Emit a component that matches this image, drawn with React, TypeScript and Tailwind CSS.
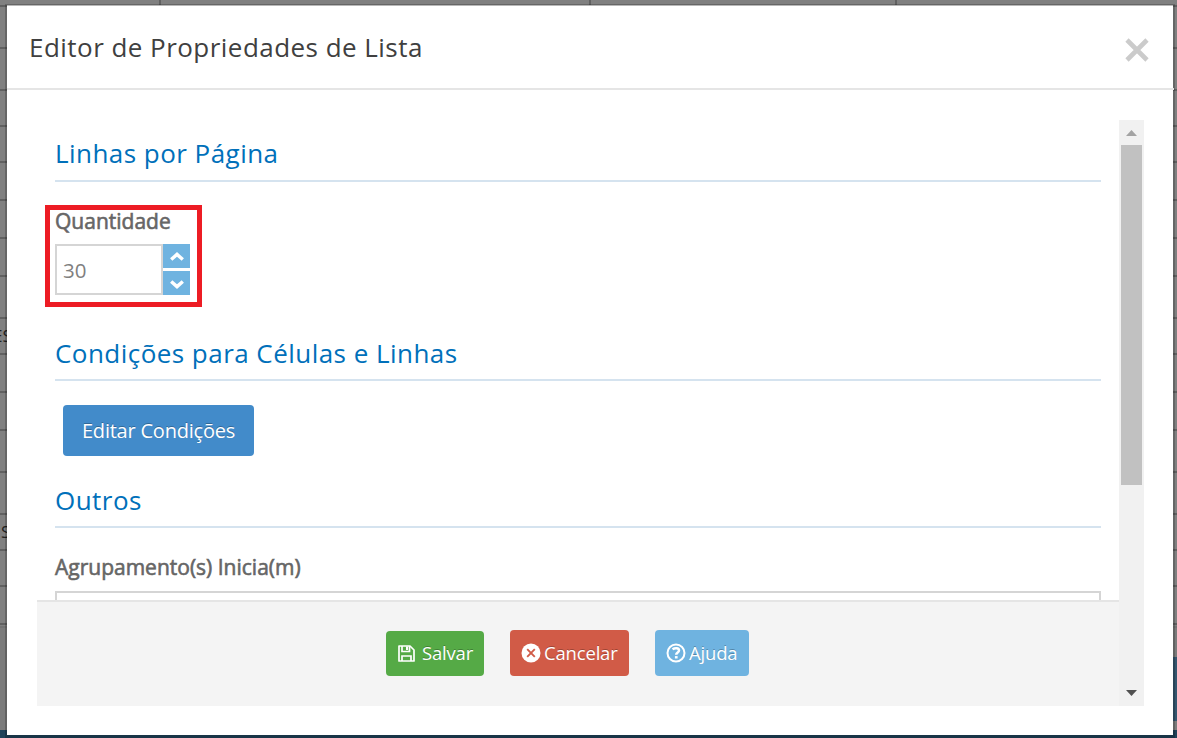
import { useState } from 'react';
import type { ReactNode } from 'react';

const ROW_HEIGHTS = [42, 42, 36, 36, 38, 38, 38, 42, 36, 38, 38, 42, 42, 36, 36, 38];
const ROW_TEXT: Record<number, string> = { 8: 'ES', 13: 'S' };

function PageBehind() {
  return (
    <div className="flex h-full flex-col bg-[#808080]">
      <div className="flex h-[5px] shrink-0">
        <div className="w-[161px] border-r-2 border-[#616161]" />
        <div className="w-[430px] border-r-2 border-[#616161]" />
        <div className="w-[306px] border-r-2 border-[#616161]" />
      </div>
      {ROW_HEIGHTS.map((height, index) => (
        <div
          key={index}
          className="flex shrink-0 items-center border-t-2 border-[#606060] text-[17px] leading-6 text-[#222]"
          style={{ height }}
        >
          <span className={index === 8 ? '-ml-[7px]' : 'ml-px'}>{ROW_TEXT[index]}</span>
        </div>
      ))}
      <div className="h-[3px] shrink-0 border-t-2 border-[#606060]" />
      <div className="flex h-[104px] shrink-0 justify-end border-t-2 border-[#737373] bg-[#7b7b7b]">
        <div className="mt-[29px] h-16 w-3 bg-[#35566f]" />
      </div>
      <div className="flex-1 bg-[#1f4259]" />
    </div>
  );
}

function Section({ title, children, className }: { title: string; children: ReactNode; className: string }) {
  return (
    <section className={className}>
      <h4 className="border-b-2 border-[#d5e3ef] text-[26px] leading-[38px] tracking-[0.46px] text-[#0070ba]">
        {title}
      </h4>
      {children}
    </section>
  );
}

function Label({ children }: { children: ReactNode }) {
  return (
    <label className="block text-[21px] leading-7 text-[#666] [-webkit-text-stroke:0.6px_#666]">
      {children}
    </label>
  );
}

function Chevron({ down = false }: { down?: boolean }) {
  return (
    <svg width="14" height="10" viewBox="0 0 14 10" className={down ? 'rotate-180' : ''}>
      <path d="M1.2 7.6 7 2.4l5.8 5.2" fill="none" stroke="#fff" strokeWidth="3.4" />
    </svg>
  );
}

function SaveIcon() {
  return (
    <svg width="17" height="17" viewBox="0 0 17 17" fill="none" stroke="#fff" strokeWidth="1.7">
      <path d="M1 1h11l4 4v11H1z" strokeLinejoin="round" />
      <path d="M4 1v5.5h7.500V1M4 16v-5h9v5" />
      <path d="M9 1.5v3.500" strokeWidth="2" />
    </svg>
  );
}

function CancelIcon() {
  return (
    <svg width="20" height="20" viewBox="0 0 20 20">
      <circle cx="10" cy="10" r="9.5" fill="#fff" />
      <path d="m6.2 6.2 7.6 7.6m0-7.6-7.6 7.6" stroke="#d15b47" strokeWidth="1.9" />
    </svg>
  );
}

function HelpIcon() {
  return (
    <svg width="20" height="20" viewBox="0 0 20 20" fill="none" stroke="#fff">
      <circle cx="10" cy="10" r="8.5" strokeWidth="2" />
      <path d="M6.5 6.3c2.5-1.5 6.5-1.5 6.5 1.2 0 2.2-2.8 1.8-2.8 4.3" strokeWidth="2.5" />
      <path d="M8.9 14.3h2.7" strokeWidth="2.4" />
    </svg>
  );
}

const BUTTON = 'flex items-center rounded-[4px] text-white [text-shadow:0_-1px_0_rgba(0,0,0,0.25)]';

export default function App() {
  const [quantity, setQuantity] = useState(30);

  return (
    <div className="relative h-[738px] w-[1177px] overflow-hidden font-['Open_Sans',sans-serif]">
      <PageBehind />

      <div className="absolute top-[5px] left-[7px] flex h-[730px] w-[1166px] flex-col border-t border-[#b8b8b8] bg-white shadow-[0_1px_0_2px_rgba(0,0,0,0.2)]">
        <header className="-mr-px flex h-[84px] shrink-0 justify-between border-b-2 border-[#e5e5e5] pr-[25px] pl-[22px]">
          <h3 className="pt-[22px] text-[26px] leading-[38px] tracking-[0.46px] text-[#404040]">
            Editor de Propriedades de Lista
          </h3>
          <button aria-label="Fechar" className="mt-8 h-6">
            <svg width="24" height="24" viewBox="0 0 24 24">
              <path d="m2 2 20 20M22 2 2 22" stroke="#cbcbcb" strokeWidth="4.6" />
            </svg>
          </button>
        </header>

        <div className="mt-[30px] ml-[30px] flex h-[586px] w-[1107px]">
          <div className="flex w-[1082px] flex-col">
            <main className="h-[480px] overflow-hidden px-[18px]">
              <Section title="Linhas por Página" className="h-[200px] pt-[14px] [&>h4]:h-12">
                <div className="mt-[23px] -ml-[10px] h-[102px] w-[157px] border-[5px] border-[#ed1c24] pl-[5px]">
                  <div className="-mt-[3px]">
                    <Label>Quantidade</Label>
                  </div>
                  <div className="mt-[9px] flex h-[51px]">
                    <input
                      value={quantity}
                      onChange={(e) => setQuantity(Number(e.target.value) || 0)}
                      className="w-[108px] border-2 border-[#d5d5d5] pt-px pl-[6px] text-[20.5px] text-[#808080] outline-none"
                    />
                    <div className="flex w-[27px] flex-col gap-[3px]">
                      <button
                        onClick={() => setQuantity(quantity + 1)}
                        className="flex h-6 items-center justify-center bg-[#6fb3e0] pt-0.5"
                      >
                        <Chevron />
                      </button>
                      <button
                        onClick={() => setQuantity(quantity - 1)}
                        className="flex h-6 items-center justify-center bg-[#6fb3e0] pt-0.5"
                      >
                        <Chevron down />
                      </button>
                    </div>
                  </div>
                </div>
              </Section>

              <Section title="Condições para Células e Linhas" className="h-[147px] pt-[14px] [&>h4]:h-[47px]">
                <button className={`${BUTTON} mt-6 ml-2 h-[51px] w-[191px] justify-center bg-[#428bca] text-[20px] tracking-[-0.22px]`}>
                  Editar Condições
                </button>
              </Section>

              <Section title="Outros" className="h-[200px] pt-[14px] [&>h4]:h-[47px]">
                <div className="mt-[25px]">
                  <Label>Agrupamento(s) Inicia(m)</Label>
                </div>
                <input className="mt-[10px] block h-[51px] w-full border-2 border-[#d5d5d5]" />
              </Section>
            </main>

            <footer className="flex h-[106px] items-end justify-center gap-[26px] border-t-2 border-[#e5e5e5] bg-[#f4f4f4] pr-[21px] pb-[30px] text-[18.5px] tracking-[-0.18px]">
              <button className={`${BUTTON} h-[45px] w-[98px] gap-[7px] bg-[#55aa46] pb-px pl-3`}>
                <SaveIcon />
                Salvar
              </button>
              <button className={`${BUTTON} h-[46px] w-[119px] gap-[3px] bg-[#d15b47] pl-[11px]`}>
                <CancelIcon />
                Cancelar
              </button>
              <button className={`${BUTTON} h-[46px] w-[94px] gap-[3px] bg-[#6fb3e0] pl-[11px]`}>
                <HelpIcon />
                Ajuda
              </button>
            </footer>
          </div>

          <div className="flex w-[25px] flex-col items-center bg-[#f1f1f1]">
            <svg width="11" height="6" viewBox="0 0 11 6" className="mt-[10px] shrink-0">
              <path d="M0 6 5.5 0 11 6z" fill="#a3a3a3" />
            </svg>
            <div className="mt-[9px] h-[340px] w-[21px] bg-[#c1c1c1]" />
            <svg width="11" height="6" viewBox="0 0 11 6" className="mt-auto mb-[10px] shrink-0">
              <path d="M0 0h11L5.5 6z" fill="#505050" />
            </svg>
          </div>
        </div>
      </div>
    </div>
  );
}
